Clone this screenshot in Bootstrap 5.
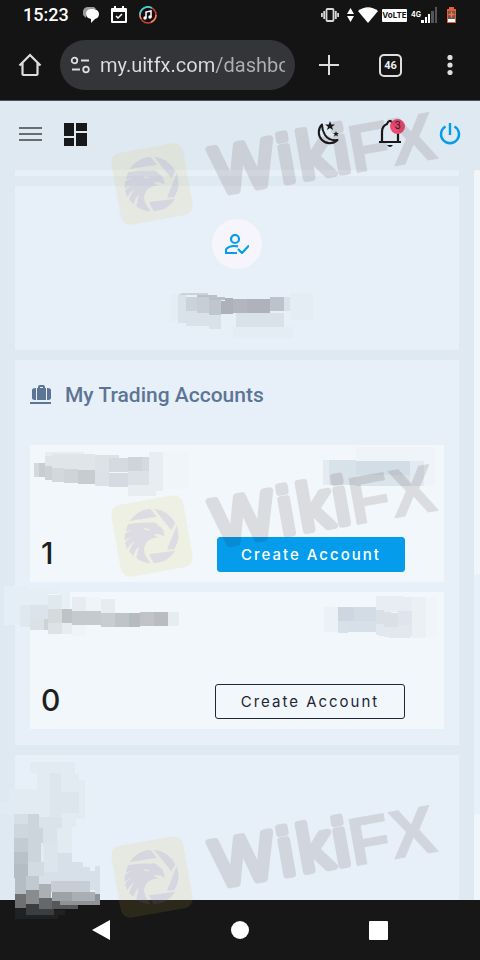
<!DOCTYPE html>
<html lang="en">
<head>
<meta charset="utf-8">
<meta name="viewport" content="width=device-width, initial-scale=1">
<title>Dashboard</title>
<link href="https://cdn.jsdelivr.net/npm/bootstrap@5.3.0/dist/css/bootstrap.min.css" rel="stylesheet">
<style>
body{background:#dfe9f2;font-family:Roboto,"Liberation Sans",sans-serif;color:#1b1b1b}
svg{display:block;flex-shrink:0}
.chrome-bg{background:#141414;color:#fff}
.status{height:30px;padding:0 23px}
.clock{font-size:18px;font-weight:500;line-height:30px;margin-right:14px}
.volte{background:#fff;color:#141414;font:700 8px/13px Inter,sans-serif;width:25px;text-align:center;border-radius:1px}
.net{font:700 7px/12px Inter,sans-serif}
.toolbar{height:70px;padding:0 18px}
.icon-btn{background:none;border:0;padding:0;color:inherit;flex-shrink:0}
.omnibox{background:#343538;height:50px;border-radius:25px;padding:0 10px;margin:0 24px 0 18px;min-width:0}
.omnibox input{border:0;outline:0;padding:0;min-width:0;width:100%;font-size:20px;line-height:24px;color:transparent;background:linear-gradient(90deg,#dcddde 114px,#aeb0b3 114px);-webkit-background-clip:text;background-clip:text}
.tabs{width:23px;height:23px;border:2px solid #dedede;border-radius:5px;font:700 11px/19px Roboto,sans-serif;color:#eee;margin:0 36px 0 40px}
.appbar{height:70px;padding:0 19px 3px;border-top:1px solid #505058}
.dash{margin-left:22px}
.bell{margin:0 36px}
.notice{top:-1px;left:13px;width:15px;height:15px;border-radius:50%;background:#ef4c74;font:10px/12px Inter,sans-serif;color:#33202a;text-align:center}
.page{padding:0 15px;gap:10px}
.panel{background:#e7f0f8}
.strip{height:6px}
.avatar{width:50px;height:50px;border-radius:50%;background:#f7f5fc}
.profile{height:164px;padding-top:33px}
.accounts{padding:23px 15px 16px}
.sect{font-size:21px;line-height:24px;font-weight:500;color:#5d7595;margin-bottom:38px}
.acct{background:#f2f7fb;height:137px;padding:0 39px 10px 11px}
.acct + .acct{margin-top:10px}
.count{font:500 30px/37px Inter,sans-serif;color:#1d1f20}
.mk{font:400 15px/20px Inter,sans-serif;letter-spacing:2px;border-radius:3px;height:35px;width:190px;padding:0;border:1px solid #1f2836;background:transparent;color:#1f2533}
.mk-main{background:#049ceb;border-color:#049ceb;color:#fff;width:188px;font-weight:500}
.rail{width:6px;background:#e7f1f9}
.rail div{background:#f1f6fa;border-radius:3px}
.thumb{flex:405}.rest{flex:239}.tail{flex:86}
.sysnav{height:60px;background:#171717;padding:0 92px}
.overlay{inset:0;pointer-events:none}
</style>
<script src="https://cdn.jsdelivr.net/npm/bootstrap@5.3.0/dist/js/bootstrap.bundle.min.js"></script>
</head>
<body>
<div class="d-flex flex-column min-vh-100 position-relative overflow-hidden">
  <div class="chrome-bg status d-flex align-items-center justify-content-between">
    <div class="d-flex align-items-center">
      <span class="clock">15:23</span>
      <svg width="16" height="17" viewBox="0 0 16 17"><path d="M5 0h6l2 2H8L3 7v4L0 8V4Q1 0 5 0Z" fill="#9b9b9b"/><path d="M7 2h4q5 1 5 5t-4 5l-4 4v-4q-5-1-5-5t4-5Z" fill="#fff"/></svg>
      <svg class="ms-2 me-2" width="24" height="18" viewBox="0 0 24 18"><path d="M5 2h2V0h2v2h6V0h2v2h2q1 0 1 1v13q0 1-1 1H5q-1 0-1-1V3q0-1 1-1Zm1 4v9h12V6Z" fill="#fff" fill-rule="evenodd"/><path d="m9 10 2 2 4-4" fill="none" stroke="#fff" stroke-width="1.5"/></svg>
      <svg width="18" height="18" viewBox="0 0 18 18"><circle cx="9" cy="9" r="8" fill="#170d12" stroke="#c94242" stroke-width="1.5"/><path d="M1 9a8 8 0 0 1 12-7" fill="none" stroke="#38d6d2" stroke-width="1.8"/><path d="M2 13a8 8 0 0 1-1-4M12 16a8 8 0 0 0 5-7" fill="none" stroke="#f28b5a" stroke-width="1.5"/><path d="M7 12V6l5-1v6" fill="none" stroke="#fff" stroke-width="1.5"/><circle cx="6" cy="12" r="1.7" fill="#fff"/><circle cx="11" cy="11" r="1.7" fill="#fff"/></svg>
    </div>
    <div class="d-flex align-items-center">
      <svg width="18" height="14" viewBox="0 0 18 14" fill="none" stroke="#d8d8d8" stroke-width="1.8"><rect x="5.5" y="1" width="7" height="12" rx="1"/><path d="M3.2 3v8M14.8 3v8M.9 5v4M17.1 5v4"/></svg>
      <svg class="ms-2" width="7" height="14" viewBox="0 0 7 14" fill="#fff"><path d="M0 6 3.500 0 7 6ZM0 8h7l-3.500 6Z"/></svg>
      <svg class="ms-1 me-1" width="20" height="16" viewBox="0 0 20 16"><path d="M0 4Q10-3.500 20 4L10 16Z" fill="#fff"/></svg>
      <span class="volte">VoLTE</span>
      <span class="net ms-1">4G</span>
      <svg width="17" height="16" viewBox="0 0 17 16"><path d="M0 13h3v3H0zM4 10h2v6H4zM7 7h2v9H7z" fill="#fff"/><path d="M10 4h3v12h-3zM14 0h2v16h-2z" fill="#555"/></svg>
      <svg class="ms-2" width="11" height="16" viewBox="0 0 11 16"><path d="M3 0h5v2h2v14H1V2h2Z" fill="#e0603c"/><path d="M2 4h7v8H2z" fill="#6d5750"/><path d="M2 12h7v3H2z" fill="#fff"/><path d="M5.500 4.500v6M2.500 7.500h6" stroke="#ff7247" stroke-width="1.500"/></svg>
    </div>
  </div>
  <div class="chrome-bg toolbar d-flex align-items-center">
    <button class="icon-btn" aria-label="Home"><svg width="24" height="24" viewBox="0 0 24 24" fill="none" stroke="#dedede" stroke-width="2.2"><path d="M1.500 12.500 12 2l10.500 10.500M4.500 10v11q0 1 1 1h13q1 0 1-1V10"/></svg></button>
    <div class="omnibox d-flex align-items-center flex-fill">
      <svg class="me-2" width="22" height="18" viewBox="0 0 22 18" fill="none" stroke="#dedede" stroke-width="1.800"><circle cx="4.500" cy="4.500" r="2.800"/><path d="M11 4.500h8M2 13.500h8"/><circle cx="16" cy="13.500" r="2.800"/></svg>
      <input type="text" aria-label="Address" value="my.uitfx.com/dashboard">
    </div>
    <button class="icon-btn" aria-label="New tab"><svg width="20" height="20" viewBox="0 0 20 20"><path d="M10 0v20M0 10h20" stroke="#dedede" stroke-width="2"/></svg></button>
    <button class="icon-btn tabs">46</button>
    <button class="icon-btn" aria-label="Menu"><svg width="24" height="20" viewBox="0 0 24 20" fill="#dedede"><circle cx="12" cy="2.500" r="2.600"/><circle cx="12" cy="10" r="2.600"/><circle cx="12" cy="17.500" r="2.600"/></svg></button>
  </div>
  <header class="appbar d-flex align-items-center">
    <button class="icon-btn" aria-label="Open menu"><svg width="23" height="16" viewBox="0 0 23 16"><path d="M0 2h23M0 8h23M0 14h23" stroke="#686d71" stroke-width="2"/></svg></button>
    <a href="#" class="dash" aria-label="Dashboard"><svg width="23" height="23" viewBox="0 0 23 23" fill="#181818"><path d="M0 0h10v13H0zM12 0h11v8H12zM0 15h10v8H0zM12 10h11v13H12z"/></svg></a>
    <button class="icon-btn ms-auto" aria-label="Dark mode"><svg width="26" height="26" viewBox="0 0 26 26"><path d="M7 3.500A10.500 10.500 0 1 0 22.500 19Q14 20 10 14 7 9 7 3.500Z" fill="none" stroke="#181818" stroke-width="2" stroke-linejoin="round"/><path d="m15 0 1.300 3.400H20L17 5.700 18.100 9 15 7l-3.100 2L13 5.700l-3-2.300h3.700ZM21 10l.8 2H24l-1.700 1.300.7 2.100-2-1.200-2 1.200.7-2.100L18 12h2.200Z" fill="#181818"/></svg></button>
    <button class="icon-btn bell position-relative" aria-label="Notifications"><svg width="26" height="28" viewBox="0 0 26 28"><path d="M5 22V12q0-6 5-8 1-3 3-3t3 3q5 2 5 8v10" fill="none" stroke="#181818" stroke-width="2.200"/><path d="M2 21h22v2H2zM10 25h6q-3 4-6 0" fill="#181818"/></svg><span class="notice position-absolute">3</span></button>
    <a href="#" aria-label="Log out"><svg width="22" height="22" viewBox="0 0 22 22" fill="none" stroke="#049ceb" stroke-width="2.400"><path d="M11 0v12M6.500 3.500A9 9 0 1 0 15.500 3.500"/></svg></a>
  </header>
  <div class="d-flex flex-grow-1">
    <main class="page d-flex flex-column flex-grow-1">
      <div class="panel strip"></div>
      <section class="panel profile d-flex justify-content-center align-items-start">
        <div class="avatar d-flex align-items-center justify-content-center"><svg width="24" height="20" viewBox="0 0 24 20" fill="none" stroke="#049ceb" stroke-width="2.2"><circle cx="10" cy="5" r="4"/><path d="M13 12.300Q4 11 1 15.500V19h11M13 15l4 4 7-7.500"/></svg></div>
      </section>
      <section class="panel accounts">
        <h2 class="sect d-flex align-items-center"><svg class="me-2" width="27" height="20" viewBox="0 0 27 20" fill="#5d7595"><path d="M7 3h1V2q0-2 2-2h3q2 0 2 2v1h1v12H7ZM10 3h3V2h-3ZM6 3v12q-4 0-4-2V5q0-2 4-2ZM17 3v12q4 0 4-2V5q0-2-4-2ZM0 17h21v2H0z" fill-rule="evenodd"/></svg>My Trading Accounts</h2>
        <div class="acct d-flex align-items-end justify-content-between"><span class="count">1</span><button class="mk mk-main">Create Account</button></div>
        <div class="acct d-flex align-items-end justify-content-between"><span class="count">0</span><button class="mk">Create Account</button></div>
      </section>
      <section class="panel flex-grow-1"></section>
    </main>
    <div class="rail d-flex flex-column"><div class="thumb"></div><span class="rest"></span><div class="tail"></div></div>
  </div>
  <nav class="sysnav d-flex align-items-center justify-content-between">
    <button class="icon-btn" aria-label="Back"><svg width="18" height="20" viewBox="0 0 18 20"><path d="M0 10 18 0v20Z" fill="#fff"/></svg></button>
    <button class="icon-btn" aria-label="Home screen"><svg width="18" height="18" viewBox="0 0 18 18"><circle cx="9" cy="9" r="9" fill="#fff"/></svg></button>
    <button class="icon-btn" aria-label="Recent apps"><svg width="19" height="19" viewBox="0 0 19 19"><rect width="19" height="19" rx="1" fill="#fff"/></svg></button>
  </nav>

  <svg class="overlay position-absolute" width="480" height="960" viewBox="0 0 480 960" aria-hidden="true">
    <defs>
      <g id="wm">
        <rect x="-36.500" y="-36.500" width="73" height="73" rx="10" transform="rotate(-10)" fill="#e0ba32" fill-opacity=".115"/>
        <g transform="scale(.33333) translate(-135 -136)" fill="#786edc" fill-opacity=".15">
          <path d="M68 91A82 82 0 0 1 130 54L150 78ZM141 54A82 82 0 0 1 205 98L193 119ZM209 104A82 82 0 0 1 202 176L180 177ZM126 191 205 180A82 82 0 0 1 140 218Z"/>
          <path d="M63 101Q95 94 130 96 146 92 156 106 172 112 172 138 160 127 140 131 145 138 158 141 138 139 122 152 104 170 116 195L130 218Q105 216 88 203 92 185 96 168 82 180 80 197L67 184Q70 166 84 150 66 162 61 176L54 158Q60 146 76 138 62 142 53 150L53 132Q60 122 77 118 62 118 56 123ZM108 111Q116 124 130 116 121 115 108 111Z" fill-rule="evenodd"/>
        </g>
        <g transform="translate(61 14) rotate(-10)" font-family="Liberation Sans, Arial, sans-serif" font-size="66" fill="#2d0a0f" stroke="#2d0a0f" stroke-linejoin="round" opacity=".11"><text y="-3" stroke-width="7"><tspan x="4">W</tspan><tspan x="71">i</tspan><tspan x="91">k</tspan><tspan x="127">i</tspan></text><text font-size="68" font-weight="700" stroke-width="1"><tspan x="142">F</tspan><tspan x="184">X</tspan></text></g>
      </g>
    </defs>
    <g shape-rendering="crispEdges">
      <g transform="translate(150 200) scale(.33333)">
        <path d="M60 282h24v82H60zM420 279h68v80h-68zM250 380h180v34H250z" fill="#e4edf4"/>
        <path d="M84 285h24v84H84zM108 333h105v45H108zM177 345h36v42h-36zM258 339h144v42H258zM402 291h18v42h-18z" fill="#dae2e9"/>
        <path d="M84 285h90v-6H96zM108 291h33v42h-33z" fill="#cbd3da"/><path d="M141 291h36v47h-36z" fill="#c7ced5"/><path d="M141 285h60v6h24v9h-48v-9h-36z" fill="#b9c1c8"/><path d="M177 300h36v45h-36z" fill="#bfc6cd"/><path d="M213 303h12v-9h25v48h-37z" fill="#adb2ba"/><path d="M250 297h42v42h-42z" fill="#b3b6be"/><path d="M292 297h68v42h-68z" fill="#afb2bb"/><path d="M360 291h42v42h-42z" fill="#bdc3cc"/>
      </g>
      <g transform="translate(0 360) scale(.33333)">
        <path d="M135 276h117v12H135zM447 276h42v117h-42zM384 375h84v33h-84z" fill="#e8edf1"/><path d="M489 273h78v114h-78z" fill="#f0f5f9"/>
        <path d="M135 288h21v30h-21zM156 282h129v48H156z" fill="#e0e5e9"/><path d="M285 285h72v52h-72z" fill="#dde2e7"/><path d="M327 294h57v42h-57zM426 291h21v42h-21z" fill="#d4dadf"/><path d="M384 291h42v42h-42z" fill="#cfd4d8"/><path d="M102 309h15v42h-15z" fill="#d5d9dc"/><path d="M117 309h18v42h-18z" fill="#c9cdcf"/><path d="M135 318h21v42h-21z" fill="#cdd1d4"/><path d="M156 324h36v42h-36z" fill="#d4d8db"/><path d="M192 327h42v42h-42z" fill="#d0d4d7"/><path d="M234 330h51v42h-51z" fill="#c8ccce"/><path d="M285 336h42v42h-42zM384 333h63v42h-63z" fill="#dce1e6"/><path d="M327 339h57v42h-57z" fill="#d5dae0"/>
      </g>
      <g transform="translate(200 430) scale(.33333)">
        <path d="M468 51h162v42H468zM630 51h75v117h-75z" fill="#eef4f7"/><path d="M369 90h18v75h-18z" fill="#e4ebf1"/><path d="M387 90h81v75h-81z" fill="#d8e2e9"/><path d="M468 93h162v42H468z" fill="#d2dde5"/><path d="M468 135h162v33H468z" fill="#dae4eb"/><path d="M630 93h42v75h-42z" fill="#e2ebf1"/>
      </g>
      <g transform="translate(0 580) scale(.33333)">
        <path d="M12 18h72v9h90v15H60v93H12z" fill="#e4eef7"/><path d="M60 30h84v45H60z" fill="#e5edf5"/><path d="M60 75h30v66H60z" fill="#dfe8ef"/><path d="M90 75h54v42H90z" fill="#dbe4ea"/><path d="M90 117h42v33H90z" fill="#dae2e6"/><path d="M132 117h12v33h-12z" fill="#ccd3d8"/><path d="M144 45h42v42h-42z" fill="#e0eaed"/><path d="M174 36h35v51h-23V45h-12z" fill="#e7f0f4"/><path d="M216 51h42v42h-42zM303 57h42v42h-42zM504 96h33v42h-33zM186 129h30v33h-30z" fill="#e7ecf1"/><path d="M258 51h45v42h-45zM216 135h42v33h-42z" fill="#eff4f8"/><path d="M144 87h42v42h-42z" fill="#d5dadd"/><path d="M144 129h42v33h-42z" fill="#dce2e6"/><path d="M186 87h30v42h-30z" fill="#bfc3c6"/><path d="M216 93h87v42h-87z" fill="#c6cacd"/><path d="M303 99h42v42h-42z" fill="#c9cdd1"/><path d="M345 99h42v42h-42z" fill="#bfc4c8"/><path d="M387 99h33v42h-33z" fill="#b6bbbe"/><path d="M420 96h42v42h-42z" fill="#c1c3c9"/><path d="M462 96h42v42h-42z" fill="#babcc0"/>
      </g>
      <g transform="translate(200 580) scale(.33333)">
        <path d="M372 81h42v76h-42z" fill="#ebf2f7"/><path d="M528 48h84v3h24v45H528z" fill="#e7edf2"/><path d="M636 51h42v123h-42z" fill="#ebf0f5"/><path d="M678 51h34v123h-34z" fill="#f0f5f9"/><path d="M414 81h48v42h-48z" fill="#ced7e1"/><path d="M462 81h66v42h-66z" fill="#d3dce5"/><path d="M414 123h30v36h-30z" fill="#d7e1e9"/><path d="M444 123h84v33h-84z" fill="#d7e0e9"/><path d="M528 90h24v6h20v3h22v42h-42v-9h-24z" fill="#d9e0e7"/><path d="M594 93h42v42h-42z" fill="#dfe5ec"/><path d="M528 132h24v9h42v-6h42v33l-9 6h-54l-45-9z" fill="#e1e8ee"/>
      </g>
      <g transform="translate(0 750) scale(.33333)">
        <path d="M0 156h45v36H0zM27 117h18v39H27z" fill="#e1ebf4"/><path d="M45 117h65v75H45zM90 36h134v35h14v20h17v115h-27v24h-13v138H117V192h-7V69H90z" fill="#e2eaf2"/><path d="M150 69h33v132h-33zM183 126h54v63h-54z" fill="#dde6ed"/>
        <path d="M117 201h69v33h-15v54h-42v-54h-12z" fill="#dbe3ea"/><path d="M132 280h42v90h-42z" fill="#dce4ec"/><path d="M174 308h41v27h34v15h21v14h15v-15h15v82h-15v-12H78v-52h96z" fill="#d7e0e8"/>
        <path d="M42 192h42v30H42z" fill="#d6dfe6"/><path d="M42 222h42v42H42z" fill="#cfd7de"/><path d="M42 264h42v42H42z" fill="#c4ccd3"/><path d="M42 306h42v36H42z" fill="#bac2c9"/><path d="M42 342h42v42H42z" fill="#b4bdc3"/><path d="M84 192h33v42h12v46h-5v57H84z" fill="#ccd4dc"/><path d="M84 337h48v41H84z" fill="#d3dbe2"/><path d="M45 384h33v48H45z" fill="#b4bcc4"/><path d="M78 378h39v42H78z" fill="#c1c9d0"/><path d="M45 432h33v42H45z" fill="#6e7072"/><path d="M78 420h39v42H78z" fill="#888c8f"/><path d="M117 402h36v42h-36z" fill="#abb0b4"/><path d="M153 393h117v33H153z" fill="#c6cdd4"/><path d="M117 444h40v32h-40z" fill="#656769"/><path d="M156 426h60v33h-60z" fill="#9da2a7"/><path d="M216 426h69v33h-69z" fill="#a9afb4"/><path d="M180 453h105v-21h15v33H180z" fill="#8f9396"/><path d="M156 453h24v12h54v12h-78z" fill="#55585a"/><path d="M78 462h39v14h45v18H78z" fill="#3c3d3f"/><path d="M45 474h33v20h117v-15h-33v15h12v12H45z" fill="#202122"/>
      </g>
    </g>
    <use href="#wm" x="152" y="184"/><use href="#wm" x="152" y="536"/><use href="#wm" x="152" y="877"/>
  </svg>
</div>
</body>
</html>
